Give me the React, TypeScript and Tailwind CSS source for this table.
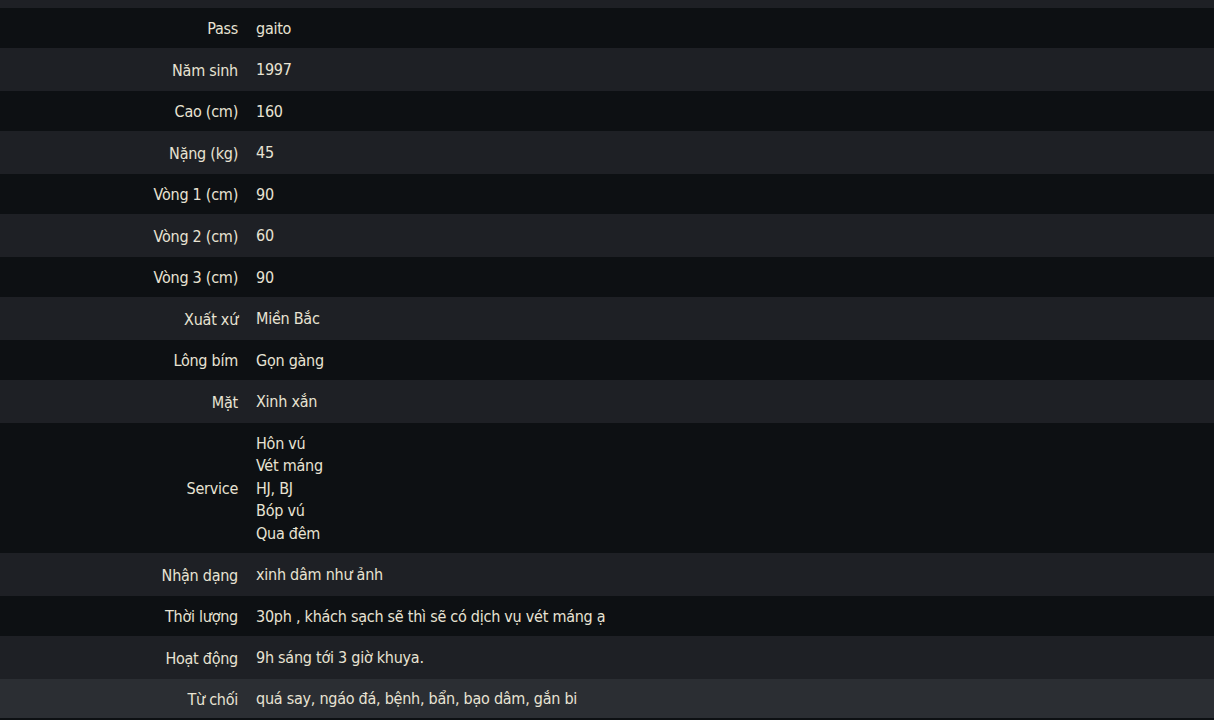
import React from "react";

const rows: [string, string[]][] = [
  ["Pass", ["gaito"]],
  ["Năm sinh", ["1997"]],
  ["Cao (cm)", ["160"]],
  ["Nặng (kg)", ["45"]],
  ["Vòng 1 (cm)", ["90"]],
  ["Vòng 2 (cm)", ["60"]],
  ["Vòng 3 (cm)", ["90"]],
  ["Xuất xứ", ["Miền Bắc"]],
  ["Lông bím", ["Gọn gàng"]],
  ["Mặt", ["Xinh xắn"]],
  ["Service", ["Hôn vú", "Vét máng", "HJ, BJ", "Bóp vú", "Qua đêm"]],
  ["Nhận dạng", ["xinh dâm như ảnh"]],
  ["Thời lượng", ["30ph , khách sạch sẽ thì sẽ có dịch vụ vét máng ạ"]],
  ["Hoạt động", ["9h sáng tới 3 giờ khuya."]],
  ["Từ chối", ["quá say, ngáo đá, bệnh, bẩn, bạo dâm, gắn bi"]],
];

export default function App() {
  return (
    <div
      className="w-[1214px] h-[720px] overflow-hidden bg-[#0d1013] text-[#e8e3d3] text-[16px] tracking-[-0.25px]"
      style={{ fontFamily: "Tahoma, 'DejaVu Sans Condensed', 'DejaVu Sans', sans-serif" }}
    >
      <div className="h-[8px] bg-[#1e2025]" />
      {rows.map(([label, vals], i) => {
        const last = i === rows.length - 1;
        const bg = last ? "bg-[#2b2e33]" : i % 2 === 0 ? "bg-[#0d1013]" : "bg-[#1e2025]";
        const h = vals.length > 1 ? "h-[130px]" : last ? "h-[39px]" : i % 2 === 0 ? "h-[40px]" : "h-[43px]";
        return (
          <div key={i} className={`flex items-center pt-[2px] ${bg} ${h}`}>
            <div className="w-[247px] pr-[9px] text-right leading-[22px]">{label}</div>
            <div className="pl-[9px] flex flex-col leading-[22.5px]">
              {vals.map((v, j) => (
                <div key={j}>{v}</div>
              ))}
            </div>
          </div>
        );
      })}
    </div>
  );
}
